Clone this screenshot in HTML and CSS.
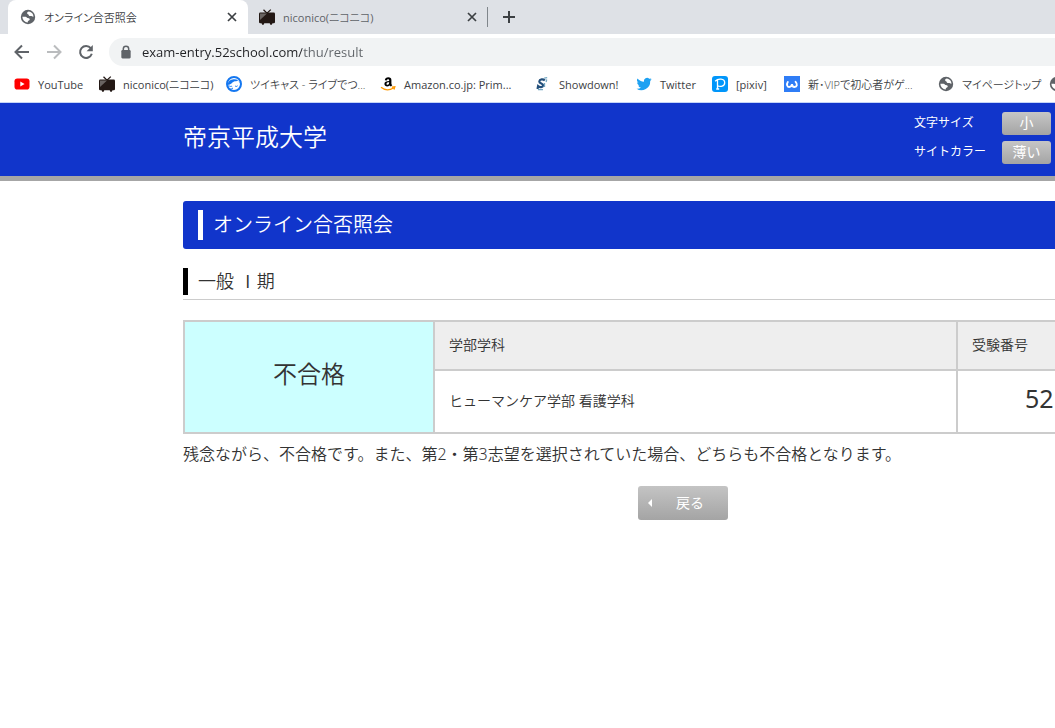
FILE: index.html
```html
<!DOCTYPE html>
<html lang="ja">
<head>
    <meta charset="UTF-8">
    <meta name="viewport" content="width=device-width, initial-scale=1.0">
    <title>オンライン合否照会</title>
    <link rel="stylesheet" href="styles.css">
</head>
<body>
    <svg class="defs" aria-hidden="true">
        <symbol id="globe" viewBox="0 0 16 16">
            <circle cx="8" cy="8" r="7.2" fill="#5f6368"/>
            <path d="M9 2.500c-1.500.2-2.200 1.200-1.800 2.100.3.900 1.300.6 1.500 1.500.2 1 1 1.100 2 .9 1-.1 1.200.7 2.800.7A5.600 5.600 0 0 0 9 2.500zM2.400 7.800c.1 3 2.300 5.500 5.400 5.700-.2-1.200.3-1.900 1.200-2.100.9-.2 1-1.200.3-1.800-.8-.6-1.800-.4-2.500-1.100-.7-.8-2.400-.7-4.400-.7z" fill="#fff"/>
        </symbol>
        <symbol id="tv" viewBox="0 0 16 16">
            <path d="M4.500.8 8 4.200 11.800.6" fill="none" stroke="#231815" stroke-width="1.300"/>
            <rect x="0" y="3.500" width="16" height="10.800" rx="1.200" fill="#231815"/>
            <path d="M2.500 14h2.800l-.6 1.700H3.200zM10.700 14h2.800l-.7 1.700h-1.500z" fill="#231815"/>
            <path d="M1 4.500h7L1 11z" fill="#6a6462"/>
        </symbol>
        <symbol id="close" viewBox="0 0 10 10">
            <path d="M1 1l8 8M9 1L1 9" fill="none" stroke="#3c4043" stroke-width="1.700"/>
        </symbol>
    </svg>

    <div class="browser">
        <div class="tabs">
            <div class="tab active">
                <svg class="icon"><use href="#globe"/></svg>
                <a class="tab-title jp" href="#">オンライン合否照会</a>
                <button class="tab-close" aria-label="タブを閉じる"><svg><use href="#close"/></svg></button>
            </div>
            <div class="tab">
                <svg class="icon"><use href="#tv"/></svg>
                <a class="tab-title" href="#">niconico(<span class="jp">ニコニコ</span>)</a>
                <button class="tab-close" aria-label="タブを閉じる"><svg><use href="#close"/></svg></button>
            </div>
            <button class="new-tab" aria-label="新しいタブ">
                <svg viewBox="0 0 12 12"><path d="M6 0v12M0 6h12" stroke="#3c4043" stroke-width="2"/></svg>
            </button>
        </div>

        <div class="toolbar">
            <button class="nav-btn" aria-label="戻る">
                <svg viewBox="0 0 16 16"><path d="M15 8H2M8 1.500L1.500 8 8 14.500" fill="none" stroke="#5f6368" stroke-width="2"/></svg>
            </button>
            <button class="nav-btn" aria-label="進む">
                <svg viewBox="0 0 16 16"><path d="M1 8h13M8 1.500L14.500 8 8 14.500" fill="none" stroke="#babcbe" stroke-width="2"/></svg>
            </button>
            <button class="nav-btn" aria-label="再読み込み">
                <svg viewBox="0 0 16 16"><path d="M12.800 4.200A6 6 0 1 0 13.800 9.800" fill="none" stroke="#5f6368" stroke-width="2"/><path d="M14.800 1v6.200H8.600z" fill="#5f6368"/></svg>
            </button>
            <div class="omnibox">
                <svg class="lock" viewBox="0 0 10 12"><path d="M2.700 5V3.300a2.300 2.300 0 0 1 4.600 0V5" fill="none" stroke="#5f6368" stroke-width="1.300"/><rect x="1" y="4.300" width="8" height="7.200" rx="1" fill="#5f6368"/></svg>
                <input type="text" class="url" aria-label="アドレス" value="exam-entry.52school.com/thu/result">
            </div>
        </div>

        <nav class="bookmarks">
            <a href="#">
                <svg class="icon" viewBox="0 0 16 16"><rect x=".5" y="2.500" width="15" height="11" rx="2.800" fill="#f00"/><path d="M6.300 5.500v5L10.600 8z" fill="#fff"/></svg>
                <span class="name">YouTube</span>
            </a>
            <a href="#">
                <svg class="icon"><use href="#tv"/></svg>
                <span class="name">niconico(<span class="jp">ニコニコ</span>)</span>
            </a>
            <a href="#">
                <svg class="icon" viewBox="0 0 16 16"><circle cx="8" cy="8" r="7" fill="#fff" stroke="#1477f0" stroke-width="2"/><path d="M1.500 9A6.700 6.700 0 0 1 14.500 8c-.9-1.200-1.500-2.200-2.300-3.500-1.500 1-3 .5-4.200.9C6 6.300 5.200 8.500 1.500 9z" fill="#1477f0"/><path d="M1.500 10.300c1.500-.6 2.200-.4 2.700.3.600-.5 1.500-.4 2 .2M9 9.800c.8.900 1.900.8 2.600 0M3 13c1.800.3 3-.2 4-.9" fill="none" stroke="#1477f0"/></svg>
                <span class="name jp">ツイキャス - ライブでつ...</span>
            </a>
            <a href="#">
                <svg class="icon" viewBox="0 0 16 16"><path d="M4.800 4.200c.1-1.900 1.700-2.900 3.500-2.900 2 0 3.100.9 3.100 2.800v3.300c0 .8.300 1.200.9 1.900l-1.500 1.300-1.200-1.200c-1.800 2-5.200 1.200-5.200-1.400 0-2.300 2-2.900 4.800-3V4.400c0-1.500-2.100-1.500-2.400.1zM9.200 6.200c-1.500 0-2.700.3-2.700 1.700 0 1.600 2.700 1.300 2.700-1.700z" fill="#000"/><path d="M1 11.300c3.700 3 8.700 3 12.500.7M11.800 11.200l3-.4-.8 2.700" fill="none" stroke="#f90" stroke-width="1.300"/></svg>
                <span class="name">Amazon.co.jp: Prim...</span>
            </a>
            <a href="#">
                <svg class="icon" viewBox="0 0 16 16"><path d="M9.800 4.400C8.300 2.700 4.600 3 4.300 5.300c-.3 2.500 4.300 2 3.800 4.200-.4 1.900-3.300 2-5 .6l-.6 2.800" fill="none" stroke="#234f7b" stroke-width="2.200"/><path d="M9.200 2.200l3-.6M11.700 3.500l-.6 2.500M9.500 7v4M3 13.700h5" fill="none" stroke="#75a9c3" stroke-width="1.300"/></svg>
                <span class="name">Showdown!</span>
            </a>
            <a href="#">
                <svg class="icon" viewBox="0 0 24 24"><path fill="#1da1f2" d="M23.600 5c-.8.400-1.700.6-2.700.8 1-.6 1.700-1.500 2-2.600-.9.500-1.900.9-3 1.100a4.700 4.700 0 0 0-8 4.300C8 8.400 4.600 6.500 2.200 3.700a4.700 4.700 0 0 0 1.500 6.200c-.8 0-1.500-.2-2.100-.6v.1c0 2.300 1.600 4.200 3.800 4.600-.7.200-1.400.2-2.100.1.600 1.800 2.300 3.200 4.400 3.200A9.500 9.500 0 0 1 .8 19.200a13.300 13.300 0 0 0 20.500-11.800c.9-.7 1.700-1.500 2.300-2.400z"/></svg>
                <span class="name">Twitter</span>
            </a>
            <a href="#">
                <svg class="icon" viewBox="0 0 16 16"><rect width="16" height="16" rx="3" fill="#0096fa"/><path d="M3.200 5.200C6 2.200 12.700 2.300 12.700 6.700c0 3.600-4.400 4.500-7 3M5.500 3.800v9.200M4.200 13h3" fill="none" stroke="#fff" stroke-width="1.300"/></svg>
                <span class="name">[pixiv]</span>
            </a>
            <a href="#">
                <svg class="icon" viewBox="0 0 16 16"><rect width="16" height="16" fill="#2f7df6"/><path d="M3.800 6C2.200 8.500 3.300 11 5.200 11 7 11 7.800 9.800 8 8c0 1.800.9 3 2.600 3 2.400 0 3.200-2.800 1-5.200" fill="none" stroke="#fff" stroke-width="1.900" stroke-linecap="round"/></svg>
                <span class="name jp">新･VIPで初心者がゲ...</span>
            </a>
            <a href="#">
                <svg class="icon"><use href="#globe"/></svg>
                <span class="name jp">マイページトップ</span>
            </a>
            <a href="#" aria-label="ブックマーク">
                <svg class="icon"><use href="#globe"/></svg>
            </a>
        </nav>
    </div>

    <div class="page">
        <header class="site-header">
            <div class="container header-inner">
                <p class="school">帝京平成大学</p>
                <div class="options">
                    <span id="sizeLabel">文字サイズ</span>
                    <button class="option-btn" aria-describedby="sizeLabel">小</button>
                    <span id="colorLabel">サイトカラー</span>
                    <button class="option-btn" aria-describedby="colorLabel">薄い</button>
                </div>
            </div>
        </header>

        <main class="container">
            <h1>オンライン合否照会</h1>
            <h2>一般 Ⅰ期</h2>

            <table class="result">
                <tr>
                    <td class="judge" rowspan="2">不合格</td>
                    <th class="dept">学部学科</th>
                    <th>受験番号</th>
                </tr>
                <tr>
                    <td>ヒューマンケア学部 看護学科</td>
                    <td class="number">52</td>
                </tr>
            </table>

            <p class="message">残念ながら、不合格です。また、第2・第3志望を選択されていた場合、どちらも不合格となります。</p>

            <div class="actions">
                <button class="back-btn">戻る</button>
            </div>
        </main>
    </div>
</body>
</html>
```
FILE: styles.css
```css
* {
    margin: 0;
    padding: 0;
    box-sizing: border-box;
}

body {
    font-family: "Noto Sans", "Noto Sans CJK JP", sans-serif;
    background: #fff;
    color: #333;
    overflow-x: hidden;
}

button {
    border: none;
    background: none;
    font-family: inherit;
    cursor: pointer;
}

a {
    color: inherit;
    text-decoration: none;
}

.defs {
    display: none;
}

.icon {
    width: 16px;
    height: 16px;
    flex-shrink: 0;
}

/* browser window */
.browser {
    font-family: "Open Sans", "Noto Sans CJK JP", sans-serif;
    font-size: 11px;
    color: #3c4043;
    border-bottom: 1px solid #c5d5f8;
    overflow: hidden;
}

.jp {
    font-weight: 350;
    font-feature-settings: "palt";
}

.tabs {
    display: flex;
    height: 34px;
    padding-left: 8px;
    background: #dee1e6;
}

.tab {
    display: flex;
    align-items: center;
    gap: 8px;
    width: 240px;
    padding: 0 10px 0 12px;
    border-right: 1px solid transparent;
    color: #5f6368;
}

.tab:not(.active) {
    padding-left: 11px;
    border-image: linear-gradient(#dee1e6 8px, #80868b 8px, #80868b 26px, #dee1e6 26px) 1;
}

.tab.active {
    background: #fff;
    border-radius: 8px 8px 0 0;
    color: #3c4043;
}

.tab-title {
    flex: 1;
    white-space: nowrap;
}

.tab-close {
    width: 10px;
    height: 10px;
}

.tab-close svg,
.new-tab svg,
.nav-btn svg {
    display: block;
    width: 100%;
    height: 100%;
}

.new-tab {
    width: 12px;
    height: 12px;
    margin: 11px 15px;
}

.toolbar {
    display: flex;
    align-items: center;
    gap: 14px;
    height: 36px;
    padding-left: 13px;
    background: #fff;
}

.nav-btn {
    width: 18px;
    height: 16px;
}

.omnibox {
    flex: 1;
    display: flex;
    align-items: center;
    gap: 10px;
    height: 28px;
    padding-left: 11px;
    background: #f1f3f4;
    border-radius: 14px 0 0 14px;
}

.lock {
    width: 12px;
    height: 14px;
}

.url {
    flex: 1;
    border: none;
    outline: none;
    font-family: inherit;
    font-size: 13px;
    /* host is darker than the path */
    color: transparent;
    background: linear-gradient(90deg, #202124 160px, #5f6368 160px);
    -webkit-background-clip: text;
    background-clip: text;
}

.bookmarks {
    display: grid;
    grid-template-columns: 85px 127px 154px 155px 101px 76px 72px 154px 111px 16px;
    align-items: center;
    height: 32px;
    padding: 0 0 4px 14px;
}

.bookmarks a {
    display: flex;
    align-items: center;
    gap: 8px;
    white-space: nowrap;
}

/* site */
.page {
    min-width: 1366px;
}

.container {
    width: 1000px;
    margin: 0 auto;
}

.site-header {
    background: #1135cb;
    border-bottom: 5px solid #a6a6a6;
    color: #fff;
}

.header-inner {
    display: flex;
    justify-content: space-between;
    height: 73px;
}

.school {
    font-size: 24px;
    font-weight: 350;
    line-height: 68px;
}

.options {
    display: grid;
    grid-template-columns: 72px 49px;
    gap: 6px 16px;
    align-content: start;
    width: 269px;
    padding-top: 9px;
    font-size: 12px;
    line-height: 22px;
}

.option-btn {
    height: 23px;
    padding-bottom: 2px;
    border-radius: 3px;
    background: linear-gradient(#c6c6c6, #a4a4a4);
    color: #fff;
    font-size: 14px;
    line-height: 20px;
}

h1 {
    display: flex;
    align-items: center;
    height: 48px;
    margin-top: 20px;
    padding-left: 15px;
    background: #1135cb;
    border-radius: 3px;
    color: #fff;
    font-size: 20px;
    font-weight: 350;
    line-height: 30px;
}

h1::before {
    content: "";
    width: 5px;
    height: 30px;
    margin-right: 10px;
    background: #fff;
}

h2 {
    display: flex;
    align-items: center;
    margin: 19px 0 20px;
    padding-bottom: 4px;
    border-bottom: 1px solid #ccc;
    font-size: 18px;
    font-weight: 350;
    line-height: 27px;
}

h2::before {
    content: "";
    width: 5px;
    height: 27px;
    margin-right: 10px;
    background: #000;
}

.result {
    width: 100%;
    border-collapse: collapse;
    table-layout: fixed;
    font-size: 14px;
}

.result th,
.result td {
    height: 49px;
    padding: 0 14px 4px;
    border: 2px solid #ccc;
    text-align: left;
    font-weight: 350;
}

.result th {
    background: #eee;
}

.result td {
    height: 63px;
}

.result .judge {
    width: 250px;
    background: #cff;
    text-align: center;
    font-size: 24px;
    padding-bottom: 10px;
}

.result .dept {
    width: 523px;
}

.result .number {
    padding-bottom: 8px;
    padding-left: 67px;
    font-size: 25px;
    font-weight: 400;
}

.message {
    margin-top: 8px;
    font-size: 16px;
    font-weight: 350;
    line-height: 24px;
}

.actions {
    margin-top: 20px;
    text-align: center;
}

.back-btn {
    display: inline-flex;
    align-items: center;
    width: 90px;
    height: 34px;
    padding: 0 10px;
    border-radius: 3px;
    background: linear-gradient(#c4c4c4, #a4a4a4);
    color: #fff;
    font-size: 14px;
    line-height: 20px;
}

.back-btn::before {
    content: "";
    margin-right: 24px;
    border: 4px solid transparent;
    border-left: none;
    border-right: 4px solid #fff;
}
```
